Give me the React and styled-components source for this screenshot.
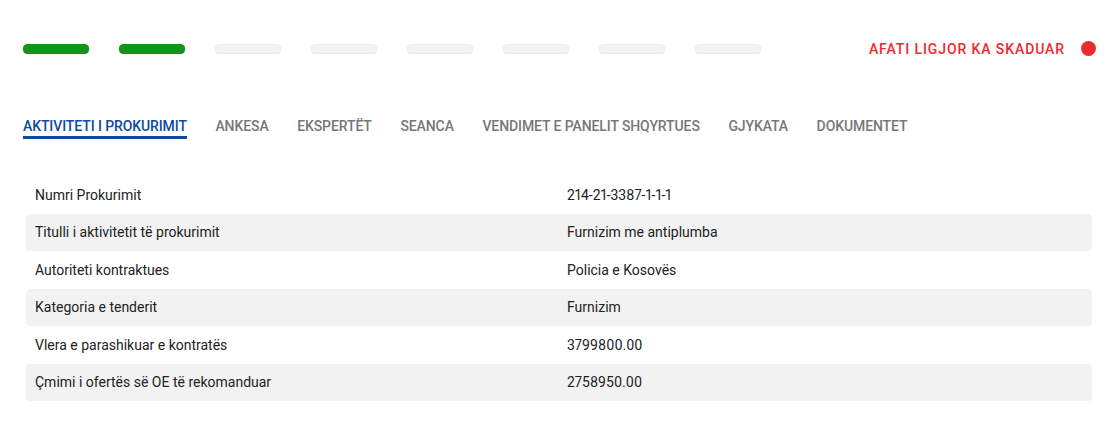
import styled, { createGlobalStyle } from "styled-components";

const GlobalStyle = createGlobalStyle`
  body {
    margin: 0;
    background: #fff;
    font-family: Roboto, "Liberation Sans", sans-serif;
  }
`

const Page = styled.div`
  padding: 41px 21px 0 23px;
`

const TopBar = styled.div`
  display: flex;
  justify-content: space-between;
  align-items: center;
  height: 15px;
  margin-bottom: 62px;
`

const Steps = styled.div`
  display: flex;
  gap: 30px;
`

const Step = styled.div`
  width: 66px;
  height: 10px;
  border-radius: 4px;
  box-sizing: border-box;
  background: ${p => (p.$done ? "#12941b" : "#f3f3f3")};
  border: 1px solid ${p => (p.$done ? "#12941b" : "#ececec")};
`

const Status = styled.div`
  display: flex;
  align-items: center;
  gap: 16px;
  color: #ee2a2e;
  font-size: 14px;
  font-weight: 500;
  letter-spacing: 0.9px;
`

const Dot = styled.span`
  width: 15px;
  height: 15px;
  border-radius: 50%;
  background: #ee2a2e;
`

const Tabs = styled.div`
  display: flex;
  gap: 28.6px;
  margin-bottom: 37px;
`

const Tab = styled.div`
  font-size: 14px;
  font-weight: 500;
  letter-spacing: -0.1px;
  color: ${p => (p.$active ? "#0b4aa0" : "#777")};
  padding-bottom: 2px;
  border-bottom: 3px solid ${p => (p.$active ? "#0b4aa0" : "transparent")};
  line-height: 16px;
  cursor: pointer;
`

const Table = styled.div`
  margin: 0 4px 0 3px;
  display: flex;
  flex-direction: column;
`

const Row = styled.div`
  display: grid;
  grid-template-columns: 532px 1fr;
  align-items: center;
  height: 37.5px;
  padding-left: 9px;
  border-radius: 4px;
  background: ${p => (p.$shade ? "#f2f2f2" : "transparent")};
  font-size: 14px;
  color: #222;
  font-feature-settings: "pnum";
`

const tabs = [
  "AKTIVITETI I PROKURIMIT",
  "ANKESA",
  "EKSPERTËT",
  "SEANCA",
  "VENDIMET E PANELIT SHQYRTUES",
  "GJYKATA",
  "DOKUMENTET",
]

const rows = [
  ["Numri Prokurimit", "214-21-3387-1-1-1"],
  ["Titulli i aktivitetit të prokurimit", "Furnizim me antiplumba"],
  ["Autoriteti kontraktues", "Policia e Kosovës"],
  ["Kategoria e tenderit", "Furnizim"],
  ["Vlera e parashikuar e kontratës", "3799800.00"],
  ["Çmimi i ofertës së OE të rekomanduar", "2758950.00"],
]

export default function App() {
  return (
    <>
      <GlobalStyle />
      <Page>
        <TopBar>
          <Steps>
            {[0, 1, 2, 3, 4, 5, 6, 7].map(i => (
              <Step key={i} $done={i < 2} />
            ))}
          </Steps>
          <Status>
            AFATI LIGJOR KA SKADUAR
            <Dot />
          </Status>
        </TopBar>
        <Tabs>
          {tabs.map((t, i) => (
            <Tab key={t} $active={i === 0}>{t}</Tab>
          ))}
        </Tabs>
        <Table>
          {rows.map(([label, value], i) => (
            <Row key={label} $shade={i % 2 === 1}>
              <span>{label}</span>
              <span>{value}</span>
            </Row>
          ))}
        </Table>
      </Page>
    </>
  )
}
